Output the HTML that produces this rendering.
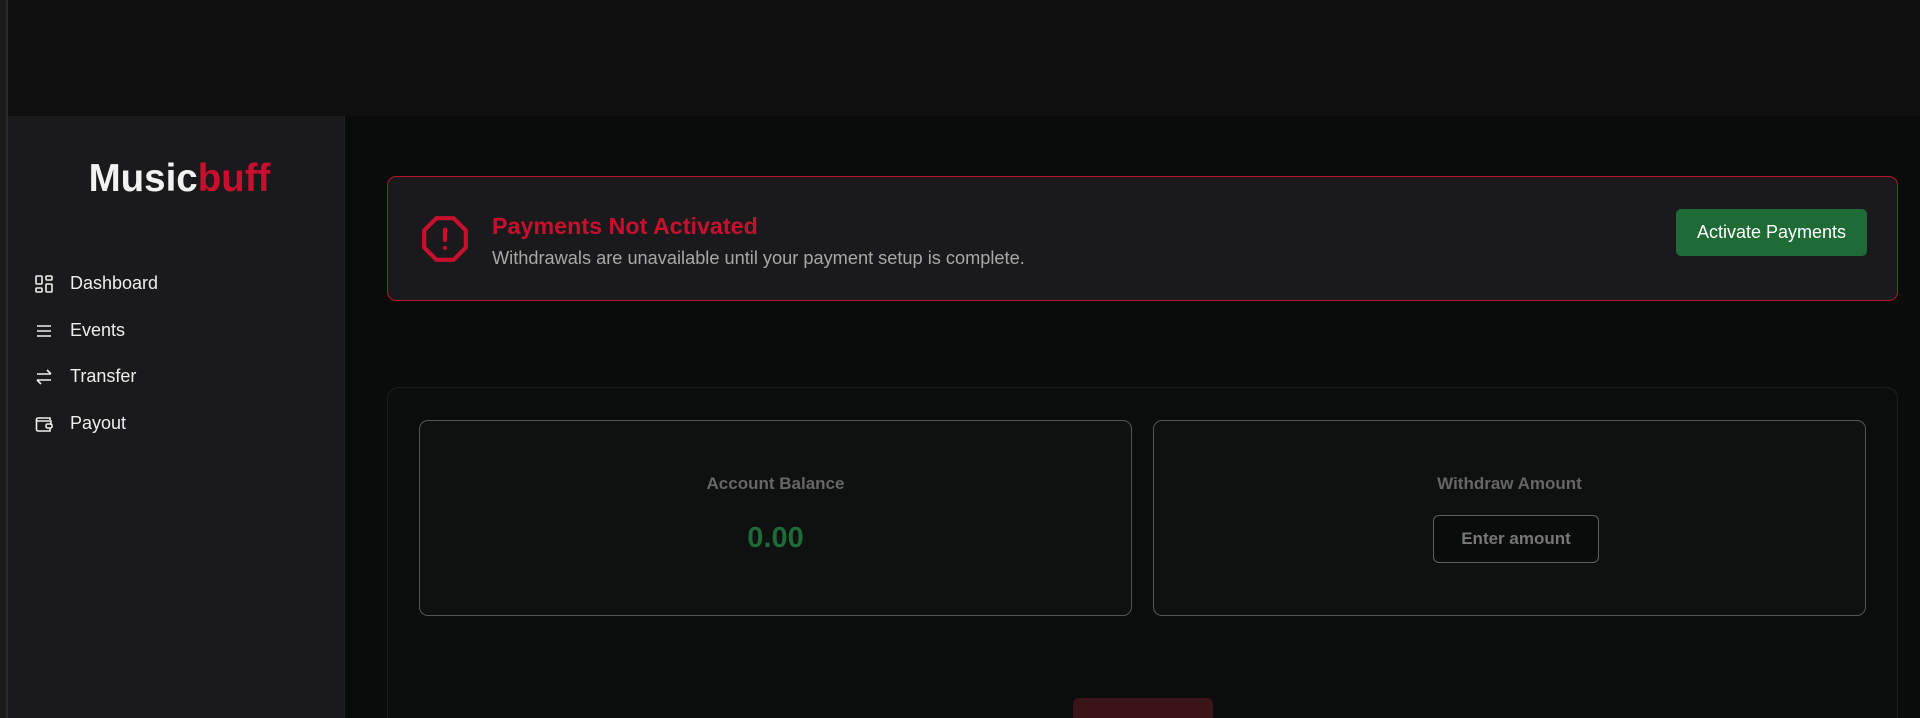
<!DOCTYPE html>
<html><head><meta charset="utf-8"><style>
*{margin:0;padding:0;box-sizing:border-box}
html,body{width:1920px;height:718px;overflow:hidden}
body{background:#0a0c0c;font-family:"Liberation Sans",sans-serif;position:relative}
.top{position:absolute;left:0;top:0;width:1920px;height:116px;background:#0f0f0f}
.edge{position:absolute;left:0;top:0;width:8px;height:718px;background:#1a1a1a;border-right:2px solid #2a2a2a}
.side{position:absolute;left:8px;top:116px;width:337px;height:602px;background:#1a1a1c;border-right:1px solid #222}
.logo{position:absolute;left:3px;width:337px;top:41px;text-align:center;font-size:38.5px;font-weight:bold;color:#f2f2f2}
.logo span{color:#c8102e}
.nav{position:absolute;left:26px;display:flex;align-items:center;color:#eee;font-size:18px}
.nav svg{width:20px;height:20px;margin-right:16px}
.alert{position:absolute;left:387px;top:176px;width:1511px;height:125px;background:#1a1a1c;border:1.5px solid #b5142b;border-radius:9px}
.title{position:absolute;left:104px;top:36px;color:#c8102e;font-weight:bold;font-size:23.3px}
.sub{position:absolute;left:104px;top:71px;color:#a8a8a8;font-size:18.2px}
.btn{position:absolute;left:1288px;top:32px;width:191px;height:47px;background:#1e6b35;border-radius:5px;color:#fff;font-size:18px;display:flex;align-items:center;justify-content:center}
.panel{position:absolute;left:387px;top:387px;width:1511px;height:331px;border:1px solid #1c1e1e;border-bottom:none;border-radius:12px 12px 0 0;background:#0b0d0d;overflow:hidden}
.card{position:absolute;top:32px;width:713px;height:196px;border:1.5px solid #555;border-radius:9px;background:#0f1111}
.lbl{position:absolute;width:100%;top:53px;text-align:center;color:#666;font-weight:bold;font-size:17px}
.val{position:absolute;width:100%;top:101px;text-align:center;color:#1e6b35;font-weight:bold;font-size:29px}
.inp{position:absolute;left:279px;top:94px;width:166px;height:48px;border:1.5px solid #5e5e5e;border-radius:6px;background:#0a0b0b;color:#777;font-weight:bold;font-size:17px;display:flex;align-items:center;justify-content:center}
.red{position:absolute;left:685px;top:310px;width:140px;height:21px;background:#3a1418;border-radius:6px 6px 0 0}
</style></head><body>
<div class="top"></div>
<div class="edge"></div>
<div class="side">
<div class="logo">Music<span>buff</span></div>
<div class="nav" style="top:157px"><svg viewBox="0 0 20 20" fill="none" stroke="#eee" stroke-width="1.6"><rect x="2" y="2" width="6" height="8" rx="1"/><rect x="12" y="2" width="6" height="4" rx="1"/><rect x="2" y="14" width="6" height="4" rx="1"/><rect x="12" y="10" width="6" height="8" rx="1"/></svg>Dashboard</div>
<div class="nav" style="top:204px"><svg viewBox="0 0 20 20" fill="none" stroke="#eee" stroke-width="1.6"><path d="M3 5h14M3 10h14M3 15h14"/></svg>Events</div>
<div class="nav" style="top:250px"><svg viewBox="0 0 20 20" fill="none" stroke="#eee" stroke-width="1.6"><path d="M3 7h14M13 3l4 4M17 13H3M7 17l-4-4"/></svg>Transfer</div>
<div class="nav" style="top:297px"><svg viewBox="0 0 20 20" fill="none" stroke="#eee" stroke-width="1.6"><path d="M16 6V4H4a1.5 1.5 0 0 0-1.5 1.5v10A1.5 1.5 0 0 0 4 17h12v-3"/><path d="M2.5 5.5A1.5 1.5 0 0 0 4 7h13v4"/><rect x="12" y="10" width="6" height="4" rx="1.5"/></svg>Payout</div>
</div>
<div class="alert">
<svg style="position:absolute;left:32px;top:37px" width="50" height="50" viewBox="0 0 24 24" fill="none" stroke="#c8102e" stroke-width="2" stroke-linejoin="round" stroke-linecap="round"><path d="M7.9 2h8.2L22 7.9v8.2L16.1 22H7.9L2 16.1V7.9z"/><path d="M12 7.5v5"/><path d="M12 16.3h.01"/></svg>
<div class="title">Payments Not Activated</div>
<div class="sub">Withdrawals are unavailable until your payment setup is complete.</div>
<div class="btn">Activate Payments</div>
</div>
<div class="panel">
<div class="card" style="left:31px"><div class="lbl">Account Balance</div><div class="val">0.00</div></div>
<div class="card" style="left:765px"><div class="lbl">Withdraw Amount</div><div class="inp">Enter amount</div></div>
<div class="red"></div>
</div>
</body></html>
